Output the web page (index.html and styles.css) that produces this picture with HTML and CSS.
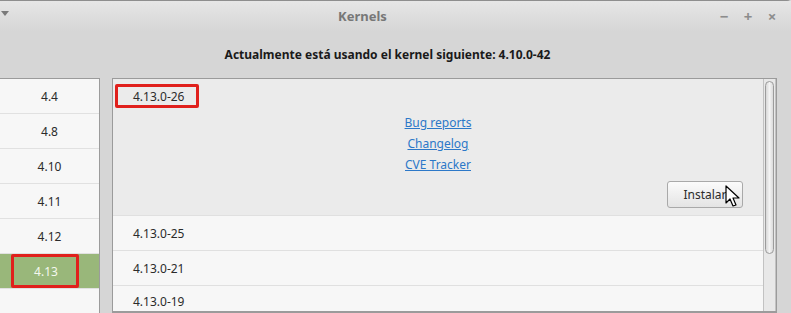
FILE: index.html
```html
<!DOCTYPE html>
<html lang="es">
<head>
    <meta charset="UTF-8">
    <title>Kernels</title>
    <link rel="stylesheet" href="styles.css">
</head>
<body>
    <div class="window">
        <div class="titlebar">
            <span class="menu-arrow"></span>
            <span class="title">Kernels</span>
            <div class="controls">
                <span class="ctrl">&minus;</span>
                <span class="ctrl">+</span>
                <span class="ctrl">&times;</span>
            </div>
        </div>
        <div class="heading">Actualmente está usando el kernel siguiente: 4.10.0-42</div>
        <div class="main">
            <div class="sidebar">
                <div class="ver">4.4</div>
                <div class="ver">4.8</div>
                <div class="ver">4.10</div>
                <div class="ver">4.11</div>
                <div class="ver">4.12</div>
                <div class="ver selected"><span class="mark">4.13</span></div>
                <div class="ver"></div>
            </div>
            <div class="panel">
                <div class="list">
                    <div class="item open">
                        <div class="item-head"><span class="mark-box">4.13.0-26</span></div>
                        <div class="links">
                            <a href="#">Bug reports</a>
                            <a href="#">Changelog</a>
                            <a href="#">CVE Tracker</a>
                        </div>
                        <div class="actions">
                            <button class="btn">Instalar</button>
                            <svg class="cursor" width="16" height="24" viewBox="0 0 16 24">
                                <path d="M1 1 L1 18 L5 14 L8 21 L11 20 L8 13 L14 13 Z" fill="#fff" stroke="#000" stroke-width="1.2" stroke-linejoin="round"/>
                            </svg>
                        </div>
                    </div>
                    <div class="item">4.13.0-25</div>
                    <div class="item">4.13.0-21</div>
                    <div class="item last">4.13.0-19</div>
                </div>
                <div class="scrollbar"><div class="thumb"></div></div>
            </div>
        </div>
    </div>
</body>
</html>
```
FILE: styles.css
```css
body {
    margin: 0;
    font-family: "Noto Sans", "Open Sans", sans-serif;
    font-size: 12px;
    color: #2b2b2b;
    background: #d6d6d6;
    overflow: hidden;
}
.window {
    width: 791px;
    height: 313px;
    display: flex;
    flex-direction: column;
    background: #d6d6d6;
    border-top: 1px solid #8e8e8e;
    border-top-right-radius: 4px;
    box-sizing: border-box;
}
.titlebar {
    height: 30px;
    display: flex;
    align-items: center;
    justify-content: center;
    position: relative;
    background: linear-gradient(#e6e6e6, #d6d6d6);
}
.menu-arrow {
    position: absolute;
    left: 1px;
    top: 10px;
    border-left: 4px solid transparent;
    border-right: 4px solid transparent;
    border-top: 5px solid #7a7a7a;
}
.title {
    font-weight: bold;
    font-size: 13px;
    color: #777;
    margin-left: -66px;
}
.controls {
    position: absolute;
    right: 13px;
    top: 5px;
    display: flex;
    gap: 12px;
}
.ctrl {
    width: 12px;
    text-align: center;
    color: #8c8c8c;
    font-weight: bold;
    font-size: 15px;
}
.heading {
    height: 47px;
    display: flex;
    align-items: center;
    justify-content: center;
    font-weight: bold;
    color: #1a1a1a;
    padding: 0 16px 1px 0;
    box-sizing: border-box;
}
.main {
    flex: 1;
    display: flex;
    gap: 12px;
    padding-right: 14px;
    min-height: 0;
}
.sidebar {
    width: 99px;
    background: #f7f7f7;
    border-top: 1px solid #9b9b9b;
    border-right: 1px solid #9b9b9b;
    overflow: hidden;
}
.ver {
    height: 34px;
    border-bottom: 1px solid #e1e1e1;
    display: flex;
    align-items: center;
    justify-content: center;
}
.ver.selected {
    background: #99b77a;
    color: #f4f7ef;
    justify-content: flex-start;
    padding-left: 11px;
}
.mark {
    width: 60px;
    height: 28px;
    border: 3px solid #e0201c;
    border-radius: 2px;
    display: flex;
    align-items: center;
    justify-content: center;
    padding-left: 2px;
}
.panel {
    flex: 1;
    display: flex;
    border: 1px solid #9b9b9b;
    border-bottom-width: 2px;
    background: #f7f7f7;
    overflow: hidden;
}
.list {
    flex: 1;
    overflow: hidden;
}
.item {
    height: 35px;
    box-sizing: border-box;
    border-bottom: 1px solid #e0e0e0;
    display: flex;
    align-items: center;
    padding-left: 20px;
}
.item.last {
    border-bottom: 1px dashed #b8b8b8;
    align-items: flex-start;
    padding-top: 7px;
    height: 26px;
    line-height: 17px;
}
.item.open {
    height: auto;
    display: block;
    padding: 0;
    background: #ebebeb;
    border-bottom: 1px solid #e0e0e0;
}
.item-head {
    height: 34px;
    padding-left: 2px;
    display: flex;
    align-items: center;
}
.mark-box {
    height: 18px;
    border: 3px solid #e0201c;
    border-radius: 2px;
    display: flex;
    align-items: center;
    padding-left: 15px;
    box-sizing: content-box;
    width: 63px;
}
.links {
    display: flex;
    flex-direction: column;
    align-items: center;
    gap: 4px;
    margin-top: 1px;
}
.links a {
    color: #2c78c8;
    font-size: 12px;
    line-height: 17px;
}
.actions {
    display: flex;
    justify-content: flex-end;
    padding: 8px 20px 7px 0;
    position: relative;
}
.btn {
    width: 76px;
    height: 27px;
    font-family: inherit;
    font-size: 12px;
    color: #2b2b2b;
    border: 1px solid #a9a9a9;
    border-radius: 3px;
    background: linear-gradient(#fbfbfb, #e4e4e4);
}
.cursor {
    position: absolute;
    right: 22px;
    top: 12px;
}
.scrollbar {
    width: 13px;
    background: #e8e8e8;
    border-left: 1px solid #c2c2c2;
    border-right: 1px solid #c2c2c2;
    padding: 2px 1px;
    box-sizing: border-box;
}
.thumb {
    height: 171px;
    border: 1px solid #9c9c9c;
    border-radius: 6px;
    background: linear-gradient(90deg, #d8d8d8, #f4f4f4, #dadada);
}
```
